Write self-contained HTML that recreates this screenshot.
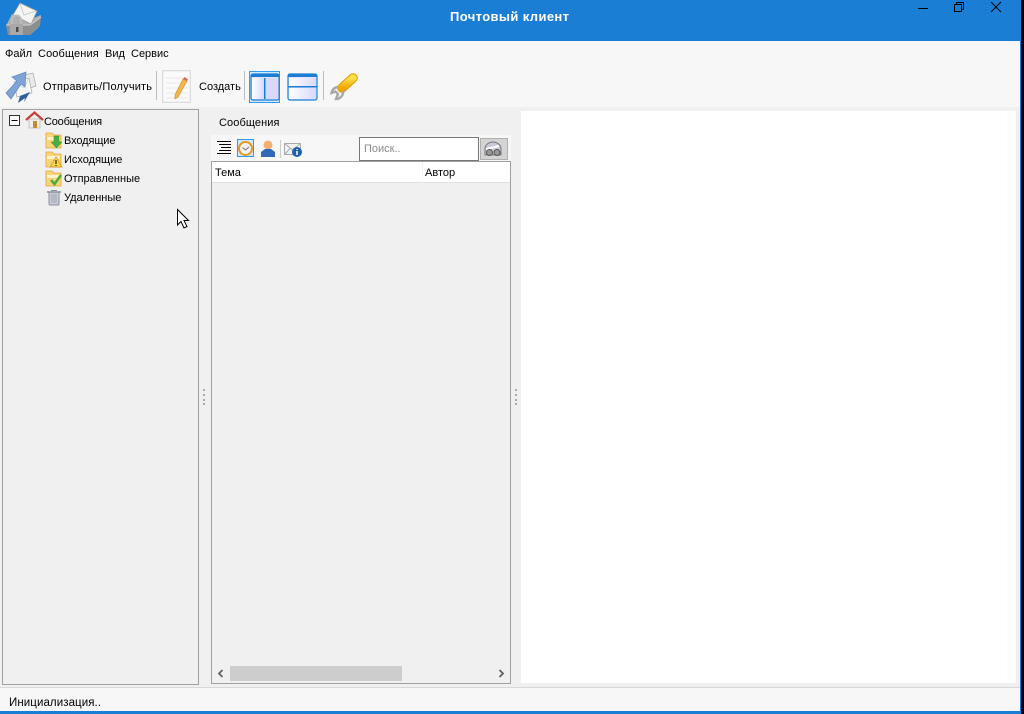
<!DOCTYPE html>
<html><head><meta charset="utf-8">
<style>
html,body{margin:0;padding:0;width:1024px;height:714px;overflow:hidden;background:#000}
#w{position:relative;width:1024px;height:714px;overflow:hidden;font:11px "Liberation Sans","DejaVu Sans",sans-serif;color:#000;background:#1a7fd4}
.a{position:absolute}
.t{position:absolute;white-space:nowrap;line-height:14px}
svg{position:absolute;overflow:visible}
</style></head><body><div id="w">
<div class="a" style="left:1021px;top:0;width:3px;height:714px;background:#000"></div>
<div class="a" style="left:0;top:41px;width:1020px;height:670px;background:#f7f7f7"></div>
<div class="a" style="left:0;top:107px;width:1020px;height:580px;background:#f0f0f0"></div>
<div class="a" style="left:0;top:687px;width:1020px;height:1px;background:#d8d8d8"></div>
<div class="a" style="left:521px;top:111px;width:495px;height:572px;background:#fff"></div>

<!-- title -->
<div class="t" style="left:450px;top:10px;color:#fff;font-weight:bold;font-size:13px;letter-spacing:.38px">Почтовый клиент</div>
<svg style="left:0;top:0" width="50" height="40">
<defs>
<linearGradient id="g1" x1="0" y1="0" x2="1" y2="0"><stop offset="0" stop-color="#fff"/><stop offset="1" stop-color="#d8d8ff"/></linearGradient>
<linearGradient id="g2" x1="0" y1="0" x2="0" y2="1"><stop offset="0" stop-color="#ffe14d"/><stop offset="1" stop-color="#f0a800"/></linearGradient>
</defs>
<path d="M7 24L12 14L28 20L41 15L38 28L30 35H8Z" fill="#b0b0b0"/>
<path d="M13 15L20 3L37 11L31 24Z" fill="#f4f4f4" stroke="#9a9a9a" stroke-width=".7"/>
<path d="M20 4L24 15L36 11" fill="none" stroke="#c4c4c4" stroke-width=".8"/>
<path d="M6 25H30L41 17L40 26L30 35H8Z" fill="#8e8e8e"/>
<path d="M6 25H30L41 17" fill="none" stroke="#c8c8c8" stroke-width="1.200"/>
<path d="M12 25v-5a4.500 4.500 0 0 1 9 0v5" fill="none" stroke="#bdbdbd" stroke-width="2"/>
<rect x="10" y="24" width="13" height="11" fill="#a9a9a9"/><rect x="16" y="27" width="2.500" height="5" fill="#4a4a4a"/>
</svg>
<svg style="left:915px;top:0" width="100" height="16" fill="none" stroke="#000">
<path d="M3 8.500H13" stroke-width="1"/>
<rect x="39.500" y="4.500" width="7" height="7"/><path d="M41.500 4.500V2.500H48.500V9.500H46.500"/>
<path d="M76 2L86 12M86 2L76 12"/>
</svg>

<!-- menu -->
<div class="t" style="left:5px;top:47px">Файл</div>
<div class="t" style="left:38px;top:47px;letter-spacing:.12px">Сообщения</div>
<div class="t" style="left:105px;top:47px">Вид</div>
<div class="t" style="left:131px;top:47px">Сервис</div>

<!-- toolbar -->
<svg style="left:0;top:66px" width="40" height="40">
<path d="M20 10L33 7L36 20L24 24Z" fill="#eaeaea" stroke="#aaa" stroke-width=".7"/>
<path d="M14 16L29 12L32 27L17 31Z" fill="#f6f6f6" stroke="#aaa" stroke-width=".7"/>
<path d="M14 16L24 22L29 12" fill="none" stroke="#c8c8c8" stroke-width=".7"/>
<path d="M20 30L30 26L24 36L25 32L18 37Z" fill="#2f5f9e"/>
<path d="M6 27L17 15L12 11L26 6L25 21L21 18L11 33Z" fill="#7fa5d6" stroke="#5e86bd" stroke-width=".7"/>
</svg>
<div class="t" style="left:43px;top:80px;letter-spacing:.18px">Отправить/Получить</div>
<div class="a" style="left:156px;top:71px;width:1px;height:29px;background:#bdbdbd"></div>
<svg style="left:162px;top:70px" width="30" height="34">
<rect x=".5" y=".5" width="28" height="32" fill="#f0f0f0" stroke="#ddd"/>
<rect x="2" y="2" width="25" height="29" fill="#fafafa"/>
<path d="M4 8H26M4 13H26M4 18H26M4 23H26M4 28H26" stroke="#e8e8e8"/>
<path d="M21 9L25 11L16 27L13 29L13 25Z" fill="#f2b84c" stroke="#c98a2a" stroke-width=".6"/>
<path d="M21 9L22.500 7L26 9.500L25 11Z" fill="#d9695a"/>
</svg>
<div class="t" style="left:199px;top:80px">Создать</div>
<div class="a" style="left:244px;top:71px;width:1px;height:29px;background:#bdbdbd"></div>
<div class="a" style="left:249px;top:71px;width:31px;height:32px;box-sizing:border-box;border:1px solid #2f9bf0;background:#cfe8fb"></div>
<svg style="left:250px;top:72px" width="70" height="30">
<rect x="1" y="2" width="28" height="26" rx="2" fill="#e4e4ff" stroke="#1a7fd4" stroke-width="1.200"/>
<rect x="1" y="2" width="28" height="3" fill="#1a7fd4"/>
<rect x="2" y="6" width="12" height="21" fill="url(#g1)"/>
<rect x="14" y="6" width="1.500" height="21" fill="#1a7fd4"/>
<rect x="15.500" y="6" width="13" height="21" fill="#d8d8fa"/>
<rect x="38" y="2" width="29" height="26" rx="2" fill="#e4e4ff" stroke="#1a7fd4" stroke-width="1.200"/>
<rect x="38" y="2" width="29" height="3" fill="#1a7fd4"/>
<rect x="39" y="6" width="27" height="8" fill="url(#g1)"/>
<rect x="38" y="14" width="29" height="1.500" fill="#1a7fd4"/>
<rect x="39" y="16" width="27" height="11" fill="url(#g1)"/>
</svg>
<div class="a" style="left:323px;top:71px;width:1px;height:29px;background:#bdbdbd"></div>
<svg style="left:330px;top:72px" width="30" height="30">
<path d="M12 16L23 6" stroke="#e09a00" stroke-width="9.500" stroke-linecap="round"/>
<path d="M12 16L23 6" stroke="url(#g2)" stroke-width="7.500" stroke-linecap="round"/>
<path d="M8 15A7 7 0 0 0 1.500 21L5.500 19.500L8 22L6 27A7 7 0 0 0 13 21L14 19" fill="none" stroke="#a8a8a8" stroke-width="2.400"/>
</svg>

<!-- left tree -->
<div class="a" style="left:2px;top:109px;width:197px;height:576px;box-sizing:border-box;border:1px solid #a0a0a0"></div>
<svg style="left:9px;top:115px" width="11" height="11"><rect x=".5" y=".5" width="10" height="10" fill="#fff" stroke="#333"/><path d="M2.500 5.500H8.500" stroke="#000"/></svg>
<svg style="left:25px;top:111px" width="19" height="18">
<rect x="4" y="8" width="11" height="9" fill="#eee" stroke="#aaa" stroke-width=".6"/><rect x="8" y="10" width="4" height="7" fill="#c98a2a"/>
<path d="M1 9L9.500 1.500L18 9" fill="none" stroke="#c9403a" stroke-width="2.200"/>
</svg>
<div class="t" style="left:44px;top:115px;letter-spacing:-.2px">Сообщения</div>
<svg style="left:46px;top:132px" width="17" height="76">
<path d="M0 1H6L8 3H15V16H0Z" fill="#fbd57a" stroke="#e3a53a" stroke-width=".8"/><path d="M1 5H14V8H1Z" fill="#fff3cf"/>
<path d="M8 3H13V9H16L10.500 15L5 9H8Z" fill="#4caf3c" stroke="#2c8a2c" stroke-width=".5" transform="translate(0,1)"/>
<g transform="translate(0,19)"><path d="M0 1H6L8 3H15V16H0Z" fill="#fbd57a" stroke="#e3a53a" stroke-width=".8"/><path d="M1 5H14V8H1Z" fill="#fff3cf"/>
<path d="M10 6L16 16H4Z" fill="#ffd83a" stroke="#c98a2a" stroke-width=".7"/><path d="M10 9V13M10 14V15" stroke="#000"/></g>
<g transform="translate(0,38)"><path d="M0 1H6L8 3H15V16H0Z" fill="#fbd57a" stroke="#e3a53a" stroke-width=".8"/><path d="M1 5H14V8H1Z" fill="#fff3cf"/>
<path d="M5 10L8.500 14L15 5" fill="none" stroke="#4caf3c" stroke-width="2.600"/></g>
<g transform="translate(1,57)"><rect x="2" y="3" width="10" height="13" rx="1" fill="#c8ccd8" stroke="#8c8f9c"/><path d="M0 3H14" stroke="#8c8f9c" stroke-width="1.500"/><path d="M5 5V14M7 5V14M9 5V14" stroke="#888c99" stroke-width=".6"/><path d="M4 1.500H10" stroke="#8c8f9c"/></g>
</svg>
<div class="t" style="left:64px;top:134px;letter-spacing:-.1px">Входящие</div>
<div class="t" style="left:64px;top:153px">Исходящие</div>
<div class="t" style="left:64px;top:172px">Отправленные</div>
<div class="t" style="left:64px;top:191px">Удаленные</div>
<svg style="left:177px;top:209px" width="12" height="20"><path d="M.5 .5V16L4 12.500L7 19L10 17.500L7 11.500H11.500Z" fill="#fff" stroke="#000"/></svg>

<!-- splitter -->
<svg style="left:203px;top:389px" width="2" height="16" fill="#aaa"><rect y="0" width="2" height="2"/><rect y="5" width="2" height="2"/><rect y="10" width="2" height="2"/><rect y="14" width="2" height="2"/></svg>
<svg style="left:515px;top:389px" width="2" height="16" fill="#aaa"><rect y="0" width="2" height="2"/><rect y="5" width="2" height="2"/><rect y="10" width="2" height="2"/><rect y="14" width="2" height="2"/></svg>

<!-- middle -->
<div class="t" style="left:219px;top:116px;letter-spacing:.1px">Сообщения</div>
<div class="a" style="left:211px;top:135px;width:300px;height:26px;background:#f7f7f7"></div>
<svg style="left:216px;top:139px" width="90" height="20">
<path d="M1 2.500H15M3 5.500H15M5 8.500H15M3 11.500H15M1 14.500H15" stroke="#000"/>
<rect x="21.500" y=".5" width="16" height="17" fill="#cfe8fb" stroke="#2f9bf0"/>
<circle cx="29.500" cy="9.500" r="6.500" fill="#f3f3f3" stroke="#e69a20" stroke-width="2"/><path d="M26.500 8.500L29.500 11L33 8" fill="none" stroke="#777"/>
<circle cx="52" cy="6" r="4.500" fill="#f5b070"/><path d="M45 18V13L49 10H55L59 13V18Z" fill="#2f68b8"/>
<path d="M64.500 2V20" stroke="#ccc" transform="translate(0,-1)"/>
<path d="M68.500 4.500H84.500V15.500H68.500Z" fill="#f3f3f3" stroke="#aaa"/><path d="M68.500 4.500L76.500 11L84.500 4.500M68.500 15.500L74 9.500M84.500 15.500L79 9.500" fill="none" stroke="#aaa"/>
<circle cx="81" cy="13" r="5" fill="#1f5fb0"/><path d="M81 12V16M81 10V11" stroke="#fff" stroke-width="1.500"/>
</svg>
<div class="a" style="left:359px;top:137px;width:120px;height:24px;box-sizing:border-box;border:1px solid #777;background:#fff"></div>
<div class="t" style="left:364px;top:142px;color:#8a8a8a">Поиск..</div>
<div class="a" style="left:480px;top:138px;width:28px;height:22px;box-sizing:border-box;border:1px solid #b0b0b0;background:#d4d4d4"></div>
<svg style="left:484px;top:141px" width="20" height="16">
<path d="M1 14V8A8 7 0 0 1 17 8V14Z" fill="#c8c8d8" stroke="#777"/><path d="M2 8L15 5" stroke="#fff" stroke-width="2"/><circle cx="5.500" cy="11.500" r="3" fill="#999" stroke="#555"/><circle cx="13" cy="11.500" r="3" fill="#999" stroke="#555"/>
</svg>
<div class="a" style="left:211px;top:161px;width:300px;height:523px;box-sizing:border-box;border:1px solid #a0a0a0"></div>
<div class="a" style="left:212px;top:162px;width:298px;height:20px;background:#fff"></div>
<div class="a" style="left:212px;top:182px;width:298px;height:1px;background:#e0e0e0"></div>
<div class="a" style="left:422px;top:162px;width:1px;height:21px;background:#f4f4f4"></div>
<div class="t" style="left:215px;top:166px">Тема</div>
<div class="t" style="left:425px;top:166px">Автор</div>
<div class="a" style="left:230px;top:666px;width:172px;height:15px;background:#cdcdcd"></div>
<svg style="left:217px;top:669px" width="290" height="10" fill="none" stroke="#606060" stroke-width="1.800"><path d="M5.500 1L2 4.500L5.500 8"/><path d="M282.500 1L286 4.500L282.500 8"/></svg>

<!-- status -->
<div class="t" style="left:9px;top:696px;font-size:11.5px;letter-spacing:.08px">Инициализация..</div>
</div></body></html>
